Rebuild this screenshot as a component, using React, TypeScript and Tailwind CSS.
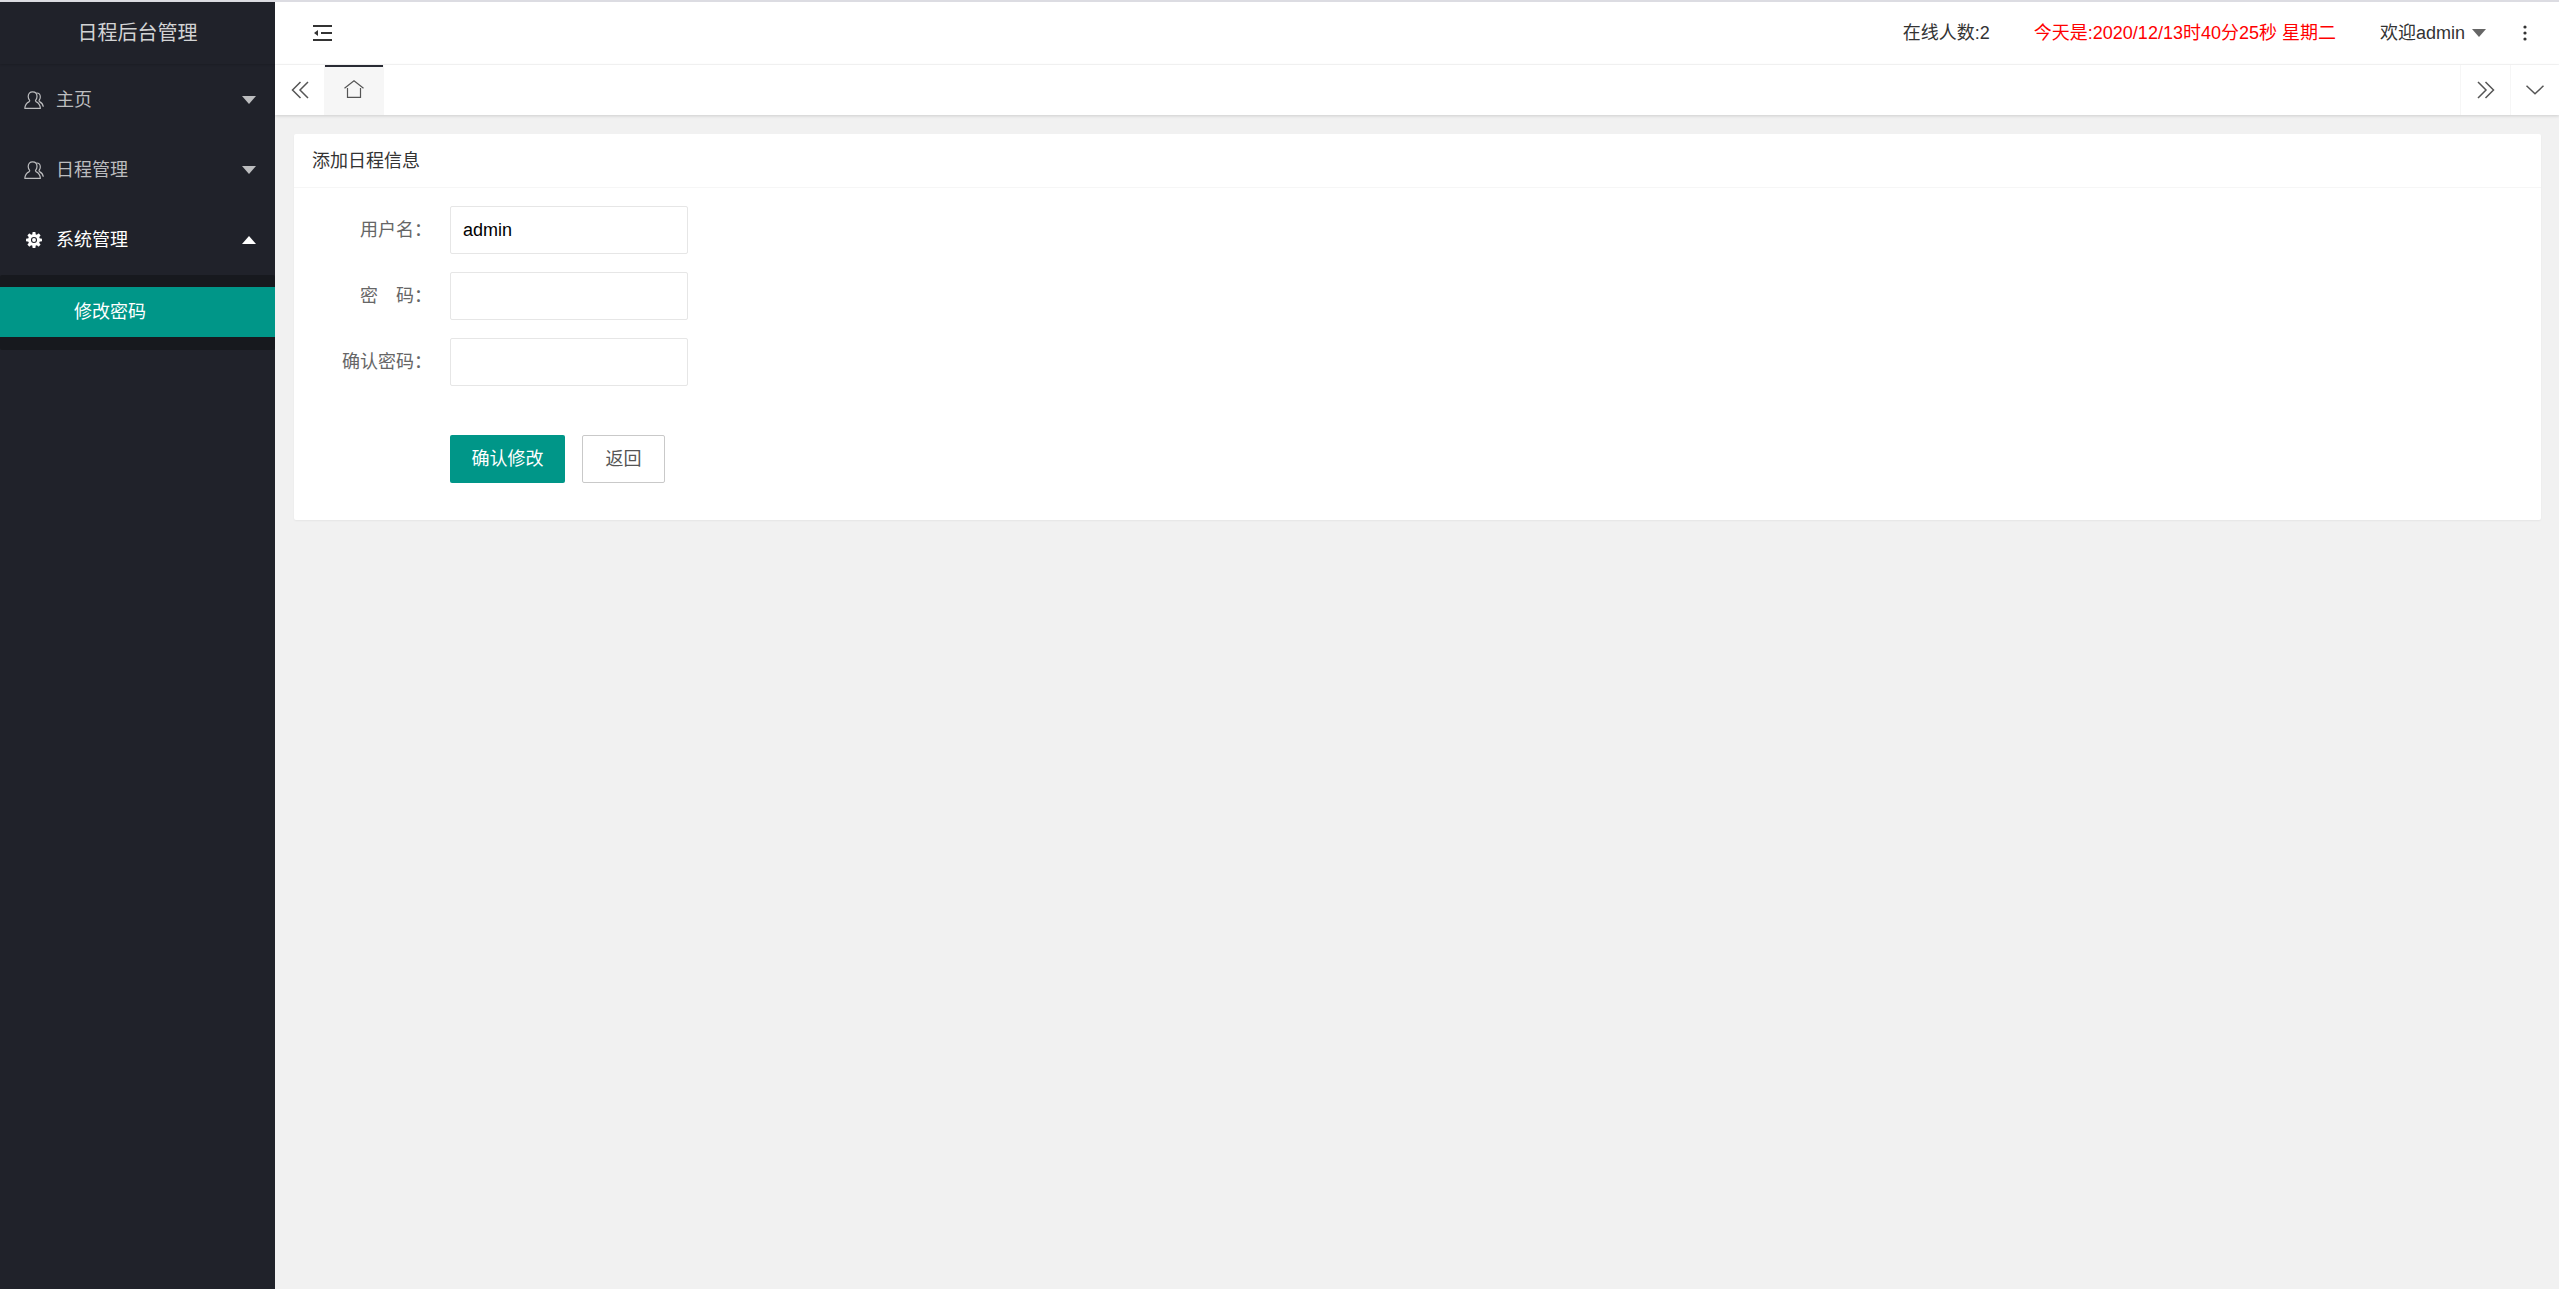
import type { ReactNode } from "react";

function Caret({ className = "", up = false }: { className?: string; up?: boolean }) {
  return (
    <svg viewBox="0 0 14 8" className={`h-2 w-[14px] shrink-0 ${className}`} fill="currentColor" aria-hidden="true">
      <path d={up ? "M0 8 7 0l7 8z" : "M0 0h14L7 8z"} />
    </svg>
  );
}

function UsersIcon() {
  return (
    <svg viewBox="0 0 20 18" className="h-[18px] w-5" fill="none" stroke="currentColor" strokeWidth="1.2" strokeLinejoin="round" aria-hidden="true">
      <path d="M.8 17.300c.2-3.200 1.600-5.300 4.400-6.700.6-.4.7-.9.3-1.500C4.600 8 4.200 7 4.200 5.500 4.200 2.500 5.900.9 8.600.9S13 2.500 13 5.500c0 1.500-.4 2.500-1.300 3.600-.4.6-.3 1.100.3 1.500 2.800 1.400 4.200 3.500 4.400 6.700z" />
      <path d="M12.500 2c2.300-.1 3.800 1.300 3.800 3.900 0 1.400-.4 2.300-1.100 3.300-.4.600-.3 1 .3 1.400 2.200 1.100 3.500 2.600 3.800 5.200" />
    </svg>
  );
}

function GearIcon() {
  const teeth = [0, 45, 90, 135];
  return (
    <svg viewBox="0 0 16 16" className="size-4" aria-hidden="true">
      {teeth.map((a) => (
        <rect key={a} x="6.400" y="0" width="3.200" height="16" rx="0.800" fill="currentColor" transform={`rotate(${a} 8 8)`} />
      ))}
      <circle cx="8" cy="8" r="6" fill="currentColor" />
      <circle cx="8" cy="8" r="2.500" fill="none" stroke="#20222A" strokeWidth="1.100" />
    </svg>
  );
}

function MenuItem({ icon, label, open = false }: { icon: ReactNode; label: string; open?: boolean }) {
  return (
    <button
      type="button"
      aria-expanded={open}
      className={`flex h-[70px] w-full items-center pr-[19px] pl-6 text-left ${open ? "text-white" : "text-[#bcbdbf]"}`}
    >
      <span className="flex w-5 justify-center">{icon}</span>
      <span className="ml-3 flex-1">{label}</span>
      <Caret up={open} />
    </button>
  );
}

function Field({ id, label, type, value }: { id: string; label: string; type: string; value?: string }) {
  return (
    <div className="flex items-center">
      <label htmlFor={id} className="w-[137px] shrink-0 pr-[18px] text-right whitespace-pre text-[#666]">
        {label}
      </label>
      <input
        id={id}
        type={type}
        defaultValue={value}
        className="h-12 w-[238px] rounded-xs border border-[#e6e6e6] bg-white px-3 text-black outline-none"
      />
    </div>
  );
}

function Sidebar() {
  return (
    <aside className="flex w-[275px] shrink-0 flex-col bg-[#20222A]">
      <div className="flex h-[62px] items-center justify-center text-xl text-[#d2d3d4] shadow-[0_1px_2px_0_rgba(0,0,0,0.15)]">
        日程后台管理
      </div>
      <nav className="mt-px">
        <MenuItem icon={<UsersIcon />} label="主页" />
        <MenuItem icon={<UsersIcon />} label="日程管理" />
        <MenuItem icon={<GearIcon />} label="系统管理" open />
        <div className="rounded-xs bg-[#17191e] pt-3 pb-[13px]">
          <a href="#password" className="flex h-[50px] items-center bg-[#009688] pl-[74px] text-white">
            修改密码
          </a>
        </div>
      </nav>
    </aside>
  );
}

function Header() {
  return (
    <header className="flex h-[63px] items-center justify-between border-b border-[#f6f6f6] bg-white pr-[31px] pl-[38px] text-[#333]">
      <button type="button" aria-label="侧边伸缩">
        <svg viewBox="0 0 19 18" className="h-[18px] w-[19px]" fill="currentColor" aria-hidden="true">
          <path d="M0 1h19v2H0zM8 8h11v2H8zM0 15h19v2H0zM1 9l4-3v6z" />
        </svg>
      </button>
      <div className="flex items-center">
        <span>在线人数:2</span>
        <span className="ml-11 text-[#f00]">今天是:2020/12/13时40分25秒 星期二</span>
        <button type="button" className="ml-11 flex items-center gap-[7px]">
          欢迎admin
          <Caret className="text-[#666]" />
        </button>
        <button type="button" aria-label="更多" className="ml-9">
          <svg viewBox="0 0 6 16" className="h-4 w-[6px]" fill="currentColor" aria-hidden="true">
            <circle cx="3" cy="2" r="1.600" />
            <circle cx="3" cy="8" r="1.600" />
            <circle cx="3" cy="14" r="1.600" />
          </svg>
        </button>
      </div>
    </header>
  );
}

function TabBar() {
  return (
    <div className="z-10 flex h-[50px] bg-white text-[#555] shadow-[0_1px_3px_0_rgba(0,0,0,0.15)]">
      <button type="button" aria-label="向左" className="flex w-[49px] items-center justify-center">
        <svg viewBox="0 0 18 18" className="size-[18px]" fill="none" stroke="currentColor" strokeWidth="1.500" aria-hidden="true">
          <path d="M9.500 1 1.500 9l8 8M17 1 9 9l8 8" />
        </svg>
      </button>
      <button type="button" aria-label="首页" className="flex w-[60px] flex-col items-center bg-[#f6f6f6]">
        <span className="h-[2px] w-[58px] bg-[#292B34]" />
        <svg viewBox="0 0 20 18" className="mt-[13px] h-[18px] w-5" fill="none" stroke="currentColor" strokeWidth="1.200" aria-hidden="true">
          <path d="M.5 8.300 10 .8l9.500 7.500M3.500 8v9.300h13V8" />
        </svg>
      </button>
      <button type="button" aria-label="向右" className="ml-auto flex w-[50px] items-center justify-center border-l border-[#f6f6f6]">
        <svg viewBox="0 0 18 18" className="size-[18px]" fill="none" stroke="currentColor" strokeWidth="1.500" aria-hidden="true">
          <path d="m1 1 8 8-8 8M8.500 1l8 8-8 8" />
        </svg>
      </button>
      <button type="button" aria-label="标签操作" className="flex w-[49px] items-center justify-center border-l border-[#f6f6f6]">
        <svg viewBox="0 0 18 10" className="h-[10px] w-[18px]" fill="none" stroke="currentColor" strokeWidth="1.500" aria-hidden="true">
          <path d="m.5.800 8.500 8 8.500-8" />
        </svg>
      </button>
    </div>
  );
}

export default function App() {
  return (
    <div className="flex min-h-screen flex-col border-t-2 border-[#dcdce2] font-['Liberation_Sans','Noto_Sans_CJK_SC',sans-serif] text-lg leading-6">
      <div className="flex flex-1">
        <Sidebar />
        <div className="flex min-w-0 flex-1 flex-col bg-[#f1f1f1]">
          <Header />
          <TabBar />
          <main className="pt-[19px] pr-[18px] pl-[19px]">
            <section className="rounded-xs bg-white shadow-[0_1px_2px_0_rgba(0,0,0,0.05)]">
              <h1 className="flex h-[54px] items-center border-b border-[#f6f6f6] px-[18px] text-[#333]">添加日程信息</h1>
              <form className="flex flex-col gap-[18px] px-[19px] pt-[18px] pb-[37px]" onSubmit={(e) => e.preventDefault()}>
                <Field id="username" label="用户名：" type="text" value="admin" />
                <Field id="password" label={"密　码："} type="password" />
                <Field id="confirm" label="确认密码：" type="password" />
                <div className="mt-[31px] ml-[137px] flex gap-[17px]">
                  <button type="submit" className="h-12 w-[115px] rounded-xs bg-[#009688] text-white">
                    确认修改
                  </button>
                  <button type="button" className="h-12 w-[83px] rounded-xs border border-[#c9c9c9] bg-white text-[#555]">
                    返回
                  </button>
                </div>
              </form>
            </section>
          </main>
        </div>
      </div>
    </div>
  );
}
